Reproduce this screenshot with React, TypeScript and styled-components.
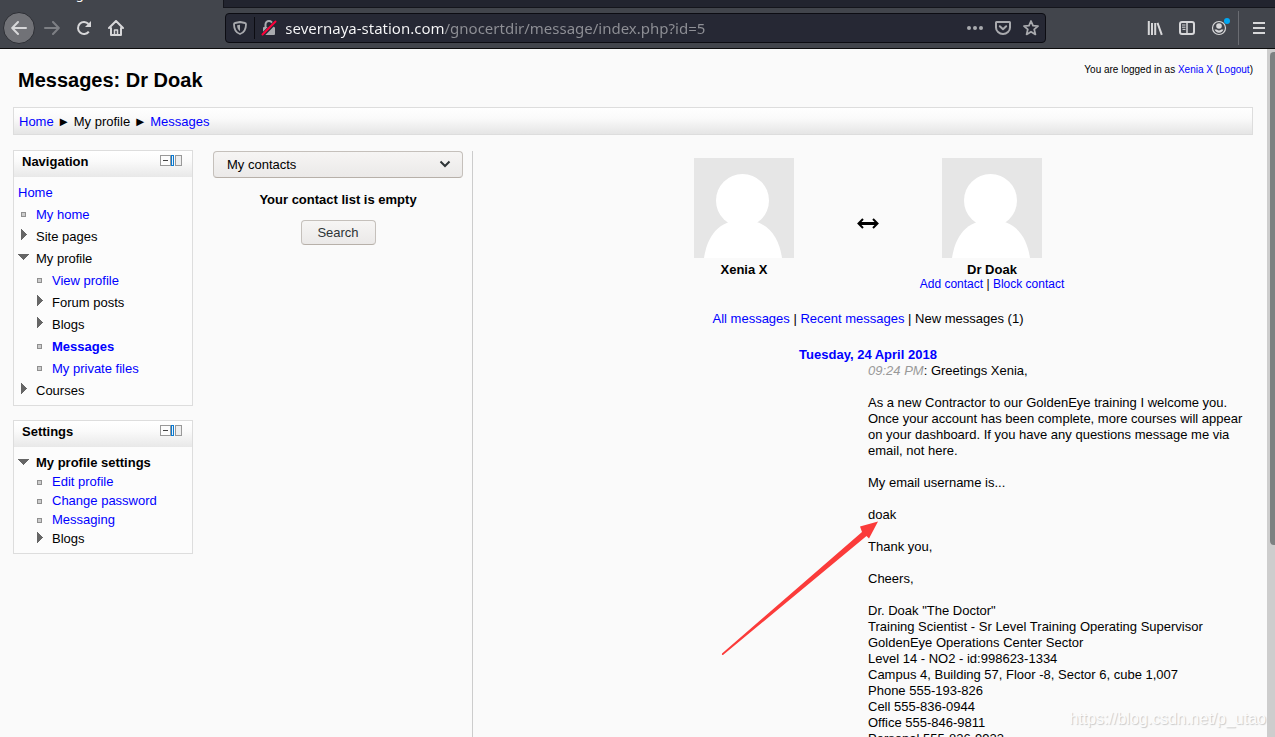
import React from "react";
import styled, { createGlobalStyle } from "styled-components";

const GlobalStyle = createGlobalStyle`
  * { box-sizing: border-box; }
  body {
    margin: 0;
    background: #fafafa;
    color: #000;
    font: 13px/16px "Liberation Sans", Arial, sans-serif;
  }
  a { color: #00f; text-decoration: none; }
  svg { display: block; }
`;

const Window = styled.div`
  display: flex;
  flex-direction: column;
  height: 100vh;
  overflow: hidden;
`;

/* ---------- browser chrome ---------- */

const TabStrip = styled.div`
  display: flex;
  flex: none;
  height: 8px;
  background: #22242f;
  border-bottom: 1px solid #14151c;
`;

const ActiveTab = styled.div`
  display: flex;
  align-items: flex-end;
  width: 224px;
  height: 8px;
  padding: 0 0 5px 37px;
  overflow: hidden;
  background: #42454c;
  border-right: 1px solid #14151c;
  color: #f9f9fa;
  font: 13px/18px "Noto Sans", sans-serif;
`;

const Toolbar = styled.div`
  display: flex;
  flex: none;
  align-items: center;
  height: 41px;
  padding: 0 0 0 3px;
  background: #42454c;
  border-bottom: 1px solid #0c0c0d;
  color: #d7d7d9;
`;

const ToolButton = styled.button<{ $dim?: boolean }>`
  display: flex;
  align-items: center;
  justify-content: center;
  flex: none;
  width: 32px;
  height: 32px;
  padding: 0;
  border: 0;
  background: none;
  color: inherit;
  opacity: ${(p) => (p.$dim ? 0.4 : 1)};
`;

const BackButton = styled(ToolButton)`
  margin-right: 1px;
  border: 1px solid #2c2e34;
  border-radius: 50%;
  background: #717277;
`;

const Spacer = styled.div`
  flex: 94 1 0;
`;

const UrlBar = styled.div`
  display: flex;
  align-items: center;
  flex: 821 1 0;
  height: 30px;
  padding: 0 0 0 3px;
  background: #262834;
  border: 1px solid #0c0c12;
  border-radius: 4px;
  color: #a9aaae;
`;

const UrlButton = styled(ToolButton)`
  width: 28px;
  height: 28px;
`;

const ShieldButton = styled(UrlButton)`
  width: 22px;
`;

const UrlDivider = styled.span`
  width: 1px;
  height: 22px;
  margin-left: 3px;
  background: #0c0c12;
`;

const UrlInput = styled.input`
  flex: 1;
  min-width: 0;
  height: 24px;
  padding: 0 0 0 2px;
  border: 0;
  outline: 0;
  background: linear-gradient(90deg, #f9f9fa 162px, #8f9096 162px);
  -webkit-background-clip: text;
  background-clip: text;
  color: transparent;
  font: 15px/24px "Noto Sans", sans-serif;
`;

const ToolbarDivider = styled.span`
  width: 1px;
  height: 34px;
  margin: 0 4px 0 3px;
  background: #6a6c72;
`;

/* ---------- page ---------- */

const Viewport = styled.div`
  display: flex;
  flex: 1;
  min-height: 0;
`;

const Page = styled.div`
  flex: 1;
  min-width: 0;
  padding: 0 4px 0 13px;
  overflow: hidden;
`;

const ScrollTrack = styled.div`
  flex: none;
  width: 8px;
  padding: 3px 0 0 3px;
  background: #cdcdcd;
`;

const ScrollThumb = styled.div`
  height: 72%;
  border-radius: 4px 0 0 4px;
  background: #7d8181;
`;

const Header = styled.header`
  display: flex;
  justify-content: space-between;
  height: 58px;
  padding: 12px 10px 0 5px;
`;

const Title = styled.h1`
  margin: 6px 0 0;
  font-size: 20px;
  line-height: 26px;
`;

const LoginInfo = styled.div`
  font-size: 10px;
  line-height: 18px;
`;

const Breadcrumb = styled.nav`
  height: 28px;
  margin: 0 10px 15px 0;
  padding: 6px 5px 4px;
  border: 1px solid #ddd;
  background: linear-gradient(#fff, #fafafa 40%, #e5e5e5);
`;

const Columns = styled.div`
  display: flex;
  align-items: flex-start;
`;

const Sidebar = styled.aside`
  flex: none;
  width: 180px;
`;

const Block = styled.section`
  margin-bottom: 14px;
  border: 1px solid #ddd;
  background: #fcfcfc;
`;

const BlockHeader = styled.div`
  display: flex;
  justify-content: space-between;
  height: 26px;
  padding: 3px 10px 0 8px;
  background: linear-gradient(#fff, #fafafa 40%, #e8e8e8);
`;

const BlockTitle = styled.h2`
  margin: 0;
  font-size: 13px;
  line-height: 16px;
`;

const BlockButton = styled.button`
  height: 13px;
  padding: 0;
  border: 0;
  background: none;
`;

const Tree = styled.ul<{ $roomy?: boolean }>`
  margin: 0;
  padding: ${(p) => (p.$roomy ? "5px 4px 3px" : "6px 4px 5px")};
  list-style: none;
  line-height: ${(p) => (p.$roomy ? 22 : 19)}px;
`;

const TreeRow = styled.li<{ $level: number; $bold?: boolean }>`
  display: flex;
  padding-left: ${(p) => Math.max(0, p.$level - 1) * 16}px;
  font-weight: ${(p) => (p.$bold ? 700 : 400)};
`;

const Marker = styled.span`
  flex: none;
  width: 18px;
  padding-top: 2px;
`;

const Contacts = styled.section`
  display: flex;
  flex-direction: column;
  align-items: center;
  flex: none;
  width: 279px;
  padding: 0 9px 0 20px;
`;

const SelectWrap = styled.label`
  position: relative;
  width: 100%;
  margin-top: 1px;
`;

const Select = styled.select`
  display: block;
  width: 100%;
  height: 27px;
  padding: 0 13px;
  appearance: none;
  border: 1px solid #c5c0bb;
  border-bottom-color: #b7b0a9;
  border-radius: 4px;
  background: linear-gradient(#f6f5f4, #ebe9e8);
  color: #000;
  font: inherit;
`;

const Chevron = styled.svg`
  position: absolute;
  right: 12px;
  top: 8px;
  pointer-events: none;
`;

const EmptyNote = styled.p`
  margin: 14px 0 12px;
  font-weight: 700;
`;

const SearchButton = styled.button`
  width: 75px;
  height: 25px;
  padding: 0;
  border: 1px solid #c5c0bb;
  border-bottom-color: #b7b0a9;
  border-radius: 4px;
  background: linear-gradient(#f6f5f4, #ebe9e8);
  color: #2e3436;
  font: inherit;
`;

const Conversation = styled.main`
  flex: 1;
  min-width: 0;
  margin-top: 1px;
  padding-top: 7px;
  border-left: 1px solid #ccc;
  text-align: center;
`;

const People = styled.div`
  display: grid;
  grid-template-columns: 150px 98px 150px;
  justify-content: center;
  justify-items: center;
`;

const Person = styled.div`
  display: flex;
  flex-direction: column;
  align-items: center;
`;

const PersonName = styled.strong`
  margin-top: 4px;
`;

const PersonLinks = styled.div`
  font-size: 12px;
  line-height: 13px;
  white-space: nowrap;
`;

const Swap = styled.div`
  padding-top: 60px;
`;

const Filters = styled.div`
  margin: 20px 0;
`;

const DateHeading = styled.h3`
  margin: 0;
  font-size: 13px;
  line-height: 16px;
  color: #00f;
`;

const Message = styled.article`
  padding: 0 5px 0 50%;
  text-align: left;
`;

const Paragraph = styled.p`
  position: relative;
  margin: 0 0 16px;
  white-space: pre-line;
`;

const Time = styled.time`
  color: #999;
  font-style: italic;
`;

const Pointer = styled.svg`
  position: absolute;
  left: -147px;
  top: 14px;
`;

const Watermark = styled.div`
  position: absolute;
  right: 9px;
  bottom: 8px;
  color: #fcfcfc;
  font: 16px/20px "Liberation Sans", Arial, sans-serif;
  text-shadow: 1px 1px 1px #c8c8c8;
`;

/* ---------- icons ---------- */

const BackIcon = () => (
  <svg width="16" height="16" viewBox="0 0 16 16" fill="none" stroke="currentColor" strokeWidth="2" strokeLinecap="round" strokeLinejoin="round">
    <path d="M15 8H1.5M7 2 1.2 8 7 14" />
  </svg>
);
const ForwardIcon = () => (
  <svg width="16" height="16" viewBox="0 0 16 16" fill="none" stroke="currentColor" strokeWidth="2" strokeLinecap="round" strokeLinejoin="round">
    <path d="M1 8h13.5M9 2l5.8 6L9 14" />
  </svg>
);
const ReloadIcon = () => (
  <svg width="16" height="16" viewBox="0 0 16 16" fill="none" stroke="currentColor" strokeWidth="2">
    <path d="M12.8 11.6A6 6 0 1 1 12.5 4" />
    <path d="M15 1v6H9z" fill="currentColor" stroke="none" />
  </svg>
);
const HomeIcon = () => (
  <svg width="16" height="16" viewBox="0 0 16 16" fill="none" stroke="currentColor" strokeWidth="2" strokeLinecap="round" strokeLinejoin="round">
    <path d="M1 8l7-7 7 7M3 8v7h10V8" />
    <path d="M6.5 15v-5h3v5" strokeWidth="1.5" />
  </svg>
);
const ShieldIcon = () => (
  <svg width="14" height="14" viewBox="0 0 14 14" fill="none" stroke="currentColor" strokeWidth="1.8" strokeLinejoin="round">
    <path d="M7 1 2 2c-.6.1-1 .5-1 1.2C1 8 2.5 11.5 7 13c4.500-1.500 6-5 6-9.800C13 2.500 12.600 2.100 12 2z" />
    <path d="M7 3.800v6.400C5 9 4.200 7 4.100 4.300z" fill="currentColor" stroke="none" />
  </svg>
);
const InsecureIcon = () => (
  <svg width="16" height="16" viewBox="0 0 16 16">
    <path d="M4.500 7V4.500a3.500 3.500 0 0 1 7 0V7" fill="none" stroke="#a9aaae" strokeWidth="2" />
    <rect x="2" y="7" width="12" height="8" rx="1" fill="#a9aaae" />
    <path d="M1 15.500 15.500 1" stroke="#262834" strokeWidth="4" />
    <path d="M1.500 14.500 14.500 1.500" stroke="#ff0039" strokeWidth="2" strokeLinecap="round" />
  </svg>
);
const DotsIcon = () => (
  <svg width="16" height="16" viewBox="0 0 16 16" fill="currentColor">
    <circle cx="2" cy="8" r="2" />
    <circle cx="8" cy="8" r="2" />
    <circle cx="14" cy="8" r="2" />
  </svg>
);
const PocketIcon = () => (
  <svg width="16" height="16" viewBox="0 0 16 16" fill="none" stroke="currentColor" strokeWidth="2" strokeLinecap="round" strokeLinejoin="round">
    <path d="M1.500 2h13c.3 0 .5.2.5.5V7.500A7 6.500 0 0 1 1 7.500V2.500c0-.3.2-.5.500-.5z" />
    <path d="M4.800 6.300 8 9.300l3.200-3" />
  </svg>
);
const StarIcon = () => (
  <svg width="16" height="16" viewBox="0 0 16 16" fill="none" stroke="currentColor" strokeWidth="1.8" strokeLinejoin="round">
    <path d="m8 1 2 4.700 5 .4-3.800 3.300 1.200 5L8 11.700l-4.400 2.700 1.200-5L1 6.100l5-.4z" />
  </svg>
);
const LibraryIcon = () => (
  <svg width="16" height="16" viewBox="0 0 16 16" fill="none" stroke="currentColor" strokeWidth="2">
    <path d="M1.800 1v14M5 3v12M8.200 3v12M10.500 2.800 14.800 14.800" />
  </svg>
);
const SidebarIcon = () => (
  <svg width="16" height="16" viewBox="0 0 16 16" fill="none" stroke="currentColor">
    <rect x="1" y="2" width="14" height="12" rx="2" strokeWidth="2" />
    <path d="M8 2v12" strokeWidth="1.5" />
    <path d="M3 5h3.500M3 7.200h3.500M3.500 9.400h3" />
  </svg>
);
const AccountIcon = () => (
  <svg width="20" height="20" viewBox="-1 1 20 20" overflow="visible">
    <circle cx="9" cy="11" r="6.5" fill="none" stroke="currentColor" strokeWidth="1.2" />
    <circle cx="9" cy="9" r="2.8" fill="currentColor" />
    <path d="M4.500 12.500h2.300a3.500 3.500 0 0 0 4.400 0h2.300a4.800 4.800 0 0 1-9 0z" fill="currentColor" />
    <circle cx="17" cy="4" r="3" fill="#00a8f3" />
  </svg>
);
const MenuIcon = () => (
  <svg width="16" height="16" viewBox="0 0 16 16" fill="none" stroke="currentColor" strokeWidth="2">
    <path d="M2 3h12M2 8h12M2 13h12" />
  </svg>
);
const DockIcon = () => (
  <svg width="22" height="11" viewBox="0 0 22 11" shapeRendering="crispEdges">
    <rect width="11" height="11" fill="#999" />
    <rect x="1" y="1" width="9" height="9" fill="#fcfcfc" />
    <rect x="3" y="5" width="5" height="1" fill="#444" />
    <rect x="11" width="3" height="11" fill="#0a7ad1" />
    <rect x="12" y="1" width="1" height="9" fill="#e8f3fc" />
    <rect x="15" width="7" height="11" fill="#999" />
    <rect x="16" y="1" width="5" height="9" fill="#eee" />
  </svg>
);

type MarkerKind = "item" | "closed" | "open" | "none";
const MarkerIcon = ({ kind }: { kind: MarkerKind }) => (
  <svg width="12" height="14" viewBox="0 0 12 14" shapeRendering="crispEdges">
    {kind === "item" && (
      <>
        <rect x="3" y="6" width="5" height="5" fill="#8f8f8f" />
        <rect x="4" y="7" width="3" height="3" fill="#ccc" />
      </>
    )}
    {kind === "closed" && <path d="M3 1l6 6-6 5z" fill="#666" />}
    {kind === "open" && <path d="M0 4h11l-5.500 6z" fill="#666" />}
  </svg>
);

const Avatar = ({ name }: { name: string }) => (
  <svg width="100" height="100" viewBox="0 0 100 100" role="img" aria-label={name}>
    <rect width="100" height="100" fill="#e6e6e6" />
    <circle cx="48.500" cy="42.500" r="26.500" fill="#fff" />
    <path d="M10 100C13 80 23 62 49 62s36 18 39 38z" fill="#fff" />
  </svg>
);

/* ---------- data ---------- */

interface Node {
  text: string;
  level: number;
  kind: MarkerKind;
  link?: boolean;
  bold?: boolean;
}

const navigation: Node[] = [
  { text: "Home", level: 0, kind: "none", link: true },
  { text: "My home", level: 1, kind: "item", link: true },
  { text: "Site pages", level: 1, kind: "closed" },
  { text: "My profile", level: 1, kind: "open" },
  { text: "View profile", level: 2, kind: "item", link: true },
  { text: "Forum posts", level: 2, kind: "closed" },
  { text: "Blogs", level: 2, kind: "closed" },
  { text: "Messages", level: 2, kind: "item", link: true, bold: true },
  { text: "My private files", level: 2, kind: "item", link: true },
  { text: "Courses", level: 1, kind: "closed" },
];

const settings: Node[] = [
  { text: "My profile settings", level: 1, kind: "open", bold: true },
  { text: "Edit profile", level: 2, kind: "item", link: true },
  { text: "Change password", level: 2, kind: "item", link: true },
  { text: "Messaging", level: 2, kind: "item", link: true },
  { text: "Blogs", level: 2, kind: "closed" },
];

const signature = [
  'Dr. Doak "The Doctor"',
  "Training Scientist - Sr Level Training Operating Supervisor",
  "GoldenEye Operations Center Sector",
  "Level 14 - NO2 - id:998623-1334",
  "Campus 4, Building 57, Floor -8, Sector 6, cube 1,007",
  "Phone 555-193-826",
  "Cell 555-836-0944",
  "Office 555-846-9811",
  "Personal 555-826-9923",
].join("\n");

const TreeBlock = ({ title, nodes, roomy }: { title: string; nodes: Node[]; roomy?: boolean }) => (
  <Block>
    <BlockHeader>
      <BlockTitle>{title}</BlockTitle>
      <BlockButton aria-label={`Hide or dock ${title} block`}>
        <DockIcon />
      </BlockButton>
    </BlockHeader>
    <Tree $roomy={roomy}>
      {nodes.map((n) => (
        <TreeRow key={n.text} $level={n.level} $bold={n.bold}>
          {n.kind !== "none" && (
            <Marker>
              <MarkerIcon kind={n.kind} />
            </Marker>
          )}
          {n.link ? <a href="#">{n.text}</a> : n.text}
        </TreeRow>
      ))}
    </Tree>
  </Block>
);

export default function App() {
  return (
    <Window>
      <GlobalStyle />
      <TabStrip>
        <ActiveTab>Messages</ActiveTab>
      </TabStrip>
      <Toolbar>
        <BackButton aria-label="Back"><BackIcon /></BackButton>
        <ToolButton aria-label="Forward" $dim><ForwardIcon /></ToolButton>
        <ToolButton aria-label="Reload"><ReloadIcon /></ToolButton>
        <ToolButton aria-label="Home"><HomeIcon /></ToolButton>
        <Spacer />
        <UrlBar>
          <ShieldButton aria-label="Tracking protection"><ShieldIcon /></ShieldButton>
          <UrlDivider />
          <UrlButton aria-label="Connection not secure"><InsecureIcon /></UrlButton>
          <UrlInput
            aria-label="Address"
            defaultValue="severnaya-station.com/gnocertdir/message/index.php?id=5"
          />
          <UrlButton aria-label="Page actions"><DotsIcon /></UrlButton>
          <UrlButton aria-label="Save to Pocket"><PocketIcon /></UrlButton>
          <UrlButton aria-label="Bookmark"><StarIcon /></UrlButton>
        </UrlBar>
        <Spacer />
        <ToolButton aria-label="Library"><LibraryIcon /></ToolButton>
        <ToolButton aria-label="Sidebars"><SidebarIcon /></ToolButton>
        <ToolButton aria-label="Account"><AccountIcon /></ToolButton>
        <ToolbarDivider />
        <ToolButton aria-label="Menu"><MenuIcon /></ToolButton>
      </Toolbar>

      <Viewport>
        <Page>
          <Header>
            <Title>Messages: Dr Doak</Title>
            <LoginInfo>
              You are logged in as <a href="#">Xenia X</a> (<a href="#">Logout</a>)
            </LoginInfo>
          </Header>
          <Breadcrumb aria-label="Breadcrumb">
            <a href="#">Home</a> ► My profile ► <a href="#">Messages</a>
          </Breadcrumb>
          <Columns>
            <Sidebar>
              <TreeBlock title="Navigation" nodes={navigation} roomy />
              <TreeBlock title="Settings" nodes={settings} />
            </Sidebar>
            <Contacts>
              <SelectWrap>
                <Select aria-label="Contact list" defaultValue="My contacts">
                  <option>My contacts</option>
                </Select>
                <Chevron width="12" height="10" viewBox="0 0 12 10" fill="none" stroke="#2e3436" strokeWidth="2">
                  <path d="M1.500 2.500 6 7l4.500-4.500" />
                </Chevron>
              </SelectWrap>
              <EmptyNote>Your contact list is empty</EmptyNote>
              <SearchButton>Search</SearchButton>
            </Contacts>
            <Conversation>
              <People>
                <Person>
                  <Avatar name="Xenia X" />
                  <PersonName>Xenia X</PersonName>
                </Person>
                <Swap>
                  <svg width="22" height="11" viewBox="0 0 22 11" fill="none" stroke="#000" strokeWidth="2">
                    <path d="M2 5.500h18" strokeWidth="3" />
                    <path d="M6 1 1.500 5.500 6 10M16 1l4.500 4.500L16 10" />
                  </svg>
                </Swap>
                <Person>
                  <Avatar name="Dr Doak" />
                  <PersonName>Dr Doak</PersonName>
                  <PersonLinks>
                    <a href="#">Add contact</a> | <a href="#">Block contact</a>
                  </PersonLinks>
                </Person>
              </People>
              <Filters>
                <a href="#">All messages</a> | <a href="#">Recent messages</a> | New messages (1)
              </Filters>
              <DateHeading>Tuesday, 24 April 2018</DateHeading>
              <Message>
                <Paragraph><Time>09:24 PM</Time>: Greetings Xenia,</Paragraph>
                <Paragraph>
                  As a new Contractor to our GoldenEye training I welcome you. Once your account has
                  {" "}been complete, more courses will appear on your dashboard. If you have any questions
                  {" "}message me via email, not here.
                </Paragraph>
                <Paragraph>My email username is...</Paragraph>
                <Paragraph>
                  doak
                  <Pointer width="158" height="136" viewBox="0 0 158 136" fill="#fb3b3a">
                    <path d="M157 .5 148 17.500 145.500 15 2 134Q.5 134.500 1 132.500L141 11 139 5.500z" />
                  </Pointer>
                </Paragraph>
                <Paragraph>Thank you,</Paragraph>
                <Paragraph>Cheers,</Paragraph>
                <Paragraph>{signature}</Paragraph>
              </Message>
            </Conversation>
          </Columns>
        </Page>
        <ScrollTrack>
          <ScrollThumb />
        </ScrollTrack>
      </Viewport>
      <Watermark>https://blog.csdn.net/p_utao</Watermark>
    </Window>
  );
}
